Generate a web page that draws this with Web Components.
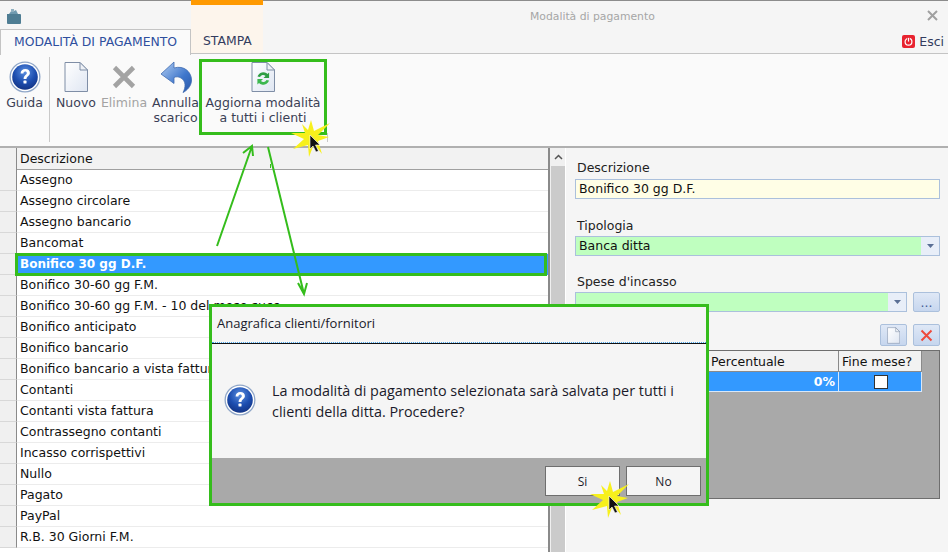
<!DOCTYPE html>
<html lang="it">
<head>
<meta charset="utf-8">
<title>Modalità di pagamento</title>
<style>
  html, body { margin: 0; height: 552px; overflow: hidden; background: #f5f5f5; }
  body { font: 12.5px "DejaVu Sans", sans-serif; color: #111; }
</style>
</head>
<body>
<app-window></app-window>

<script>
const FONT = `"DejaVu Sans", sans-serif`;

const ICONS = {
  help: (s) => `<svg width="${s}" height="${s}" viewBox="0 0 32 32">
      <defs><radialGradient id="hb" cx="50%" cy="30%" r="75%"><stop offset="0" stop-color="#5b8fe0"/><stop offset=".55" stop-color="#1d4eb0"/><stop offset="1" stop-color="#12307e"/></radialGradient></defs>
      <circle cx="16" cy="16" r="15.5" fill="#8fa6c8"/><circle cx="16" cy="16" r="14.2" fill="#fff"/><circle cx="16" cy="16" r="12.8" fill="url(#hb)"/>
      <path d="M11.6 12.6c0-2.9 2-4.5 4.7-4.5 2.8 0 4.6 1.6 4.6 3.9 0 2.9-3.4 3.4-3.4 6h-2.9c0-3.6 3.2-4 3.2-5.9 0-.9-.6-1.5-1.6-1.5-1.1 0-1.7.7-1.8 2z" fill="#fff"/>
      <rect x="14.5" y="19.6" width="3" height="3" rx=".6" fill="#fff"/></svg>`,
  doc: (w, h, inner = '') => `<svg width="${w}" height="${h}" viewBox="0 0 24 30">
      <defs><linearGradient id="dg" x1="0" y1="0" x2="1" y2="1"><stop offset="0" stop-color="#fff"/><stop offset="1" stop-color="#dfe6f2"/></linearGradient></defs>
      <path d="M1 .5h15L23.5 8v21.5H1z" fill="url(#dg)" stroke="#7f8ea6"/><path d="M16 .5V8h7.5z" fill="#eef1f6" stroke="#7f8ea6"/>${inner}</svg>`,
  del: `<svg width="24" height="24" viewBox="0 0 24 24"><path d="M2.5 2.5l19 19M21.5 2.5l-19 19" stroke="#a3a3a3" stroke-width="4.6"/></svg>`,
  undo: `<svg width="32" height="32" viewBox="0 0 32 32">
      <defs><linearGradient id="ug" x1="0" y1="0" x2="1" y2="1"><stop offset="0" stop-color="#b4cff2"/><stop offset=".6" stop-color="#3f77cc"/><stop offset="1" stop-color="#2a57a8"/></linearGradient></defs>
      <path d="M1 13L14 1v6C24 4 31.500 11 31.500 19 31.500 25 27 29.500 23 31.500 26 26 26 20 21 17 18.500 15.500 16 15.500 14 16.500v6z" fill="url(#ug)" stroke="#3f6bb0" stroke-width=".8"/></svg>`,
  wallet: `<svg width="16" height="17" viewBox="0 0 16 17"><path d="M1 6h13a1 1 0 0 1 1 1v8a1 1 0 0 1-1 1H2a1 1 0 0 1-1-1z" fill="#4e7d93"/><path d="M3 6l3-4 2 1 2-1 2 4z" fill="#6f9aaf"/><rect x="5" y="1" width="3" height="3" fill="#8fb0c0"/></svg>`,
  power: `<svg width="13" height="13" viewBox="0 0 13 13"><rect width="13" height="13" rx="2" fill="#e8232f"/><circle cx="6.5" cy="6.800" r="3.400" fill="none" stroke="#fff" stroke-width="1.200"/><path d="M6.500 2.600v4" stroke="#e8232f" stroke-width="2.600"/><path d="M6.500 3v3.600" stroke="#fff" stroke-width="1.200"/></svg>`
};

const REFRESH = `<path d="M6.500 14.500a6 6 0 0 1 10-2.500l1.600-1.600v5.600h-5.600l2-2a3.400 3.400 0 0 0-5.500 1z" fill="#2f9e44"/><path d="M18 18.500a6 6 0 0 1-10 2.500l-1.600 1.600V17h5.600l-2 2a3.400 3.400 0 0 0 5.500-1z" fill="#3cb84f"/>`;

// title bar + tabs
class AppHeader extends HTMLElement {
  connectedCallback() {
    this.attachShadow({ mode: 'open' }).innerHTML = `
      <style>
        :host { display: grid; grid-template-columns: 191px 72px 1fr; grid-template-rows: 28px 25px; border-top: 1px solid #8c8c8c; background: #f5f5f5; font-family: ${FONT}; }
        .app-icon { grid-column: 1; grid-row: 1; padding: 7px 0 0 6px; }
        .title { grid-column: 3; grid-row: 1; display: flex; justify-content: space-between; padding: 9px 10px 0 267px; color: #a6a6a6; font-size: 10.800px; }
        .close { width: 11px; height: 11px; }
        .tab { grid-column: 1; grid-row: 2; box-sizing: border-box; border: 1px solid #c4c4c4; border-bottom: 0; background: #fafafa; color: #2f4f9e; font-size: 12.400px; padding: 4px 0 0 13px; z-index: 1; height: 26px; }
        .ctx { grid-column: 2; grid-row: 1 / 3; background: #fdf5ec; border-top: 5px solid #ff9900; border-bottom: 1px solid #c4c4c4; color: #333c5e; font-size: 12.400px; padding: 28px 0 0 12px; box-sizing: border-box; margin-top: -1px; }
        .exit { grid-column: 3; grid-row: 2; display: flex; justify-content: flex-end; align-items: center; gap: 4px; padding: 0 4px 0 0; border-bottom: 1px solid #c4c4c4; color: #333c5e; font-size: 12.500px; }
      </style>
      <div class="app-icon">${ICONS.wallet}</div>
      <div class="title"><span>Modalità di pagamento</span>
        <svg class="close" viewBox="0 0 11 11"><path d="M1 1l9 9M10 1l-9 9" stroke="#a0a0a0" stroke-width="2"/></svg></div>
      <div class="tab">MODALITÀ DI PAGAMENTO</div>
      <div class="ctx">STAMPA</div>
      <div class="exit">${ICONS.power}<span>Esci</span></div>`;
  }
}

class RibbonButton extends HTMLElement {
  connectedCallback() {
    this.attachShadow({ mode: 'open' }).innerHTML = `
      <style>
        :host { display: flex; flex-direction: column; align-items: center; box-sizing: border-box; font-size: 12.500px; line-height: 15px; color: #3a3f55; text-align: center; white-space: nowrap; }
        :host([disabled]) { color: #a3a3a3; }
        :host([marked]) { outline: 3px solid #35bd1c; outline-offset: -3px; }
        .ico { height: 32px; display: flex; align-items: center; justify-content: center; margin-bottom: 1px; }
      </style>
      <div class="ico"><slot name="icon"></slot></div>
      <div><slot></slot></div>`;
  }
}

class AppRibbon extends HTMLElement {
  connectedCallback() {
    this.attachShadow({ mode: 'open' }).innerHTML = `
      <style>
        :host { display: flex; height: 92px; background: #fafafa; border-bottom: 2px solid #b0b0b0; font-family: ${FONT}; }
        .sep { width: 1px; background: #c9c9c9; margin: 3px 0 4px; }
        ribbon-button { padding-top: 8px; }
        .tail { width: 1px; height: 9px; background: #c9c9c9; align-self: flex-end; margin-bottom: 4px; }
      </style>
      <ribbon-button style="width:49px"><span slot="icon">${ICONS.help(32)}</span>Guida</ribbon-button>
      <div class="sep"></div>
      <ribbon-button style="width:52px"><span slot="icon">${ICONS.doc(24, 30)}</span>Nuovo</ribbon-button>
      <ribbon-button style="width:44px" disabled><span slot="icon">${ICONS.del}</span>Elimina</ribbon-button>
      <ribbon-button style="width:53px;padding-left:6px"><span slot="icon">${ICONS.undo}</span>Annulla<br>scarico</ribbon-button>
      <ribbon-button marked style="width:128px;height:76px;margin-top:5px;padding-top:3px">
        <span slot="icon">${ICONS.doc(24, 30, REFRESH)}</span>Aggiorna modalità<br>a tutti i clienti</ribbon-button>
      <div class="tail"></div>`;
  }
}

class PayGrid extends HTMLElement {
  connectedCallback() {
    const rows = ['Assegno', 'Assegno circolare', 'Assegno bancario', 'Bancomat', 'Bonifico 30 gg D.F.',
      'Bonifico 30-60 gg F.M.', 'Bonifico 30-60 gg F.M. - 10 del mese succ.', 'Bonifico anticipato', 'Bonifico bancario',
      'Bonifico bancario a vista fattura', 'Contanti', 'Contanti vista fattura', 'Contrassegno contanti',
      'Incasso corrispettivi', 'Nullo', 'Pagato', 'PayPal', 'R.B. 30 Giorni F.M.'];
    this.attachShadow({ mode: 'open' }).innerHTML = `
      <style>
        :host { display: grid; grid-template-columns: 1fr 16px; width: 566px; box-sizing: border-box; overflow: hidden; font-family: ${FONT}; background: #fff; }
        .list { border-right: 2px solid #8a8a8a; min-width: 0; }
        .row { display: grid; grid-template-columns: 17px 1fr; height: 21px; box-sizing: border-box; }
        .row > i { background: #f0f0f0; border-right: 1px solid #8a8a8a; border-bottom: 1px solid #d8d8d8; }
        .row > span { padding-left: 3px; line-height: 20px; border-bottom: 1px solid #ececec; white-space: nowrap; position: relative; }
        .head { height: 22px; border-bottom: 1px solid #a0a0a0; background: #f2f2f2; }
        .head > i, .head > span { border-bottom: 0; }
        .head > span { line-height: 22px; }
        .sel > span { background: #3399ff; color: #fff; font-weight: bold; font-size: 12px; border-bottom: 0; }
        .sel > span::before { content: ''; position: absolute; left: -2px; top: -1px; right: 1px; bottom: -1px; border: 3px solid #35bd1c; }
        .bar { background: #f0f0f0; display: flex; flex-direction: column; padding-left: 1px; border-right: 1px solid #fff; }
        .up { height: 18px; display: flex; justify-content: center; align-items: center; }
        .thumb { flex: 1; background: #cbcbcb; }
      </style>
      <div class="list">
        <div class="row head"><i></i><span>Descrizione</span></div>
        ${rows.map((r, i) => `<div class="row${i === 4 ? ' sel' : ''}"><i></i><span>${r}</span></div>`).join('')}
      </div>
      <div class="bar"><div class="up"><svg width="9" height="6" viewBox="0 0 9 6"><path d="M1 5l3.500-3.500L8 5" fill="none" stroke="#555" stroke-width="1.500"/></svg></div><div class="thumb"></div></div>`;
  }
}

// input or combo of the form; it has the arrow when combo is set
class FormField extends HTMLElement {
  connectedCallback() {
    const combo = this.hasAttribute('combo');
    this.attachShadow({ mode: 'open' }).innerHTML = `
      <style>
        :host { display: flex; flex: 1; height: 20px; box-sizing: border-box; border: 1px solid #abc0dc; background: ${combo ? '#bfffbf' : '#fffee6'}; line-height: 18px; padding-left: 3px; }
        span { flex: 1; }
        .arrow { width: 18px; background: #e8eef8; display: flex; align-items: center; justify-content: center; }
      </style>
      <span><slot></slot></span>
      ${combo ? '<div class="arrow"><svg width="7" height="4" viewBox="0 0 7 4"><path d="M0 0h7L3.500 4z" fill="#5a6f95"/></svg></div>' : ''}`;
  }
}

class ToolButton extends HTMLElement {
  connectedCallback() {
    this.attachShadow({ mode: 'open' }).innerHTML = `
      <style>
        :host { display: flex; align-items: center; justify-content: center; width: 27px; box-sizing: border-box; border: 1px solid #abc0dc; border-radius: 2px; background: linear-gradient(#dfe8f6, #c6d6ee); color: #3c5a92; }
      </style>
      <slot></slot>`;
  }
}

class FormPanel extends HTMLElement {
  connectedCallback() {
    this.attachShadow({ mode: 'open' }).innerHTML = `
      <style>
        :host { display: block; flex: 1; padding: 13px 8px 0 9px; font-family: ${FONT}; background: #f5f5f5; min-width: 0; }
        label { display: block; height: 15px; line-height: 13px; margin-bottom: 3px; padding-left: 2px; color: #222; }
        label.low { line-height: 15px; }
        .line { display: flex; gap: 6px; height: 20px; }
        .gap1 { height: 19px; } .gap2 { height: 18px; }
        .tools { display: flex; justify-content: flex-end; gap: 6px; height: 22px; margin-top: 12px; }
        .table { margin-top: 4px; height: 149px; box-sizing: border-box; background: #a9a9a9; border: 1px solid #6e6e6e; }
        .tr { display: grid; grid-template-columns: 130px 83px; margin-left: 133px; }
        .th { height: 21px; background: #f2f2f2; line-height: 21px; padding-left: 2px; border-right: 1px solid #8a8a8a; border-bottom: 1px solid #8a8a8a; white-space: nowrap; box-sizing: border-box; }
        .th + .th { padding-left: 3px; }
        .td { height: 20px; background: #3399ff; color: #fff; font-weight: bold; line-height: 20px; padding-right: 3px; border-right: 1px solid #d8e8fa; border-bottom: 1px solid #d8e8fa; box-sizing: border-box; display: flex; justify-content: flex-end; }
        .td.c { justify-content: center; align-items: center; padding-right: 0; padding-left: 1px; }
        .check { width: 12px; height: 12px; background: #fff; border: 1px solid #333; }
      </style>
      <label>Descrizione</label>
      <div class="line"><form-field>Bonifico 30 gg D.F.</form-field></div>
      <div class="gap1"></div>
      <label class="low">Tipologia</label>
      <div class="line"><form-field combo>Banca ditta</form-field></div>
      <div class="gap2"></div>
      <label class="low">Spese d'incasso</label>
      <div class="line"><form-field combo></form-field><tool-button>...</tool-button></div>
      <div class="tools">
        <tool-button>${ICONS.doc(13, 17)}</tool-button>
        <tool-button><svg width="13" height="13" viewBox="0 0 13 13"><path d="M1.500 1.500l10 10M11.500 1.500l-10 10" stroke="#ee4a3c" stroke-width="2"/></svg></tool-button>
      </div>
      <div class="table">
        <div class="tr"><div class="th">Percentuale</div><div class="th">Fine mese?</div></div>
        <div class="tr"><div class="td">0%</div><div class="td c"><div class="check"></div></div></div>
      </div>`;
  }
}

class MsgDialog extends HTMLElement {
  connectedCallback() {
    this.attachShadow({ mode: 'open' }).innerHTML = `
      <style>
        :host { position: absolute; left: 209px; top: 304px; width: 500px; height: 202px; box-sizing: border-box; border: 3px solid #35bd1c; background: #f5f5f5; display: flex; flex-direction: column; font-family: "Open Sans", sans-serif; color: #1a1a2a; }
        .head { height: 36px; line-height: 33px; padding-left: 5px; font-size: 13px; border-bottom: 1px solid #111; position: relative; }
        .head::after { content: ''; position: absolute; left: 0; right: 0; bottom: 0; border-bottom: 1px dotted #4aa8f0; }
        .body { flex: 1; display: flex; align-items: center; gap: 16px; padding: 0 0 2px 12px; font-size: 14.360px; line-height: 21px; }
        .body div { padding-top: 2px; }
        .foot { height: 45px; background: #a9a9a9; display: flex; justify-content: flex-end; gap: 6px; padding: 8px 5px 7px 0; box-sizing: border-box; }
        button { width: 75px; height: 30px; border: 1px solid #6e6e6e; background: #f5f5f5; font: 12px "Open Sans", sans-serif; color: #1a1a2a; padding: 0; }
      </style>
      <div class="head">Anagrafica clienti/fornitori</div>
      <div class="body">${ICONS.help(32)}<div>La modalità di pagamento selezionata sarà salvata per tutti i<br>clienti della ditta. Procedere?</div></div>
      <div class="foot"><button>Si</button><button>No</button></div>`;
  }
}

// yellow click mark with the mouse pointer, lies over the page
class ClickSpark extends HTMLElement {
  connectedCallback() {
    const x = this.getAttribute('x'), y = this.getAttribute('y');
    this.attachShadow({ mode: 'open' }).innerHTML = `
      <style>:host { position: absolute; left: ${x - 22}px; top: ${y - 20}px; width: 44px; height: 44px; pointer-events: none; }</style>
      <svg width="44" height="44" viewBox="0 0 44 44">
        <polygon fill="#f7f01c" points="22,4 25,15 41,7 29,19 40,21 29,25 33,38 25,28 20,41 19,29 4,33 15,23 2,17 16,17 13,8 19,14" />
        <path d="M21 19l0 14 3-3 3 6 2.500-1-3-6h4.500z" fill="#111" stroke="#fff" stroke-width=".6"/>
      </svg>`;
  }
}

class AppWindow extends HTMLElement {
  connectedCallback() {
    this.attachShadow({ mode: 'open' }).innerHTML = `
      <style>
        :host { display: flex; flex-direction: column; height: 552px; position: relative; overflow: hidden; }
        .main { flex: 1; display: flex; min-height: 0; }
        .arrows { position: absolute; left: 0; top: 0; pointer-events: none; }
      </style>
      <app-header></app-header>
      <app-ribbon></app-ribbon>
      <div class="main"><pay-grid></pay-grid><form-panel></form-panel></div>
      <svg class="arrows" width="948" height="552" fill="none" stroke="#35bd1c" stroke-width="2">
        <path d="M217 246L252 146M243 153l9-7 1 10"/>
        <path d="M268 147L304 294M298 283l6 11 3-11"/>
        <path d="M270.500 164v4" stroke-width="1"/>
      </svg>
      <msg-dialog></msg-dialog>
      <click-spark x="311" y="136"></click-spark>
      <click-spark x="610" y="497"></click-spark>`;
  }
}

customElements.define('app-header', AppHeader);
customElements.define('ribbon-button', RibbonButton);
customElements.define('app-ribbon', AppRibbon);
customElements.define('pay-grid', PayGrid);
customElements.define('form-field', FormField);
customElements.define('tool-button', ToolButton);
customElements.define('form-panel', FormPanel);
customElements.define('msg-dialog', MsgDialog);
customElements.define('click-spark', ClickSpark);
customElements.define('app-window', AppWindow);
</script>
</body>
</html>
